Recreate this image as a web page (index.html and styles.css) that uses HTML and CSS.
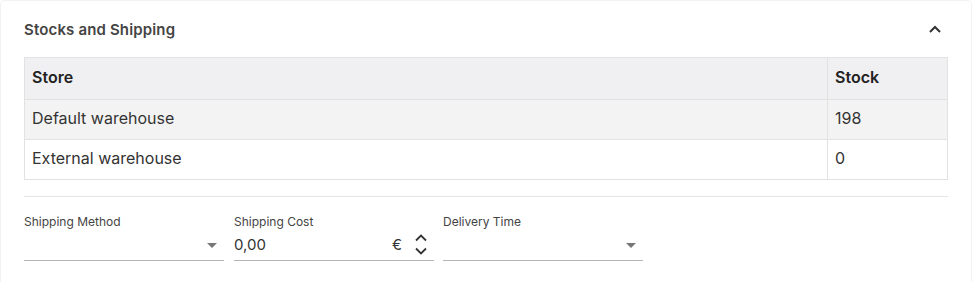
FILE: index.html
```html
<!DOCTYPE html>
<html>
<head>
<meta charset="utf-8">
<link rel="stylesheet" href="styles.css">
</head>
<body>
<div class="card">
  <div class="card-head">
    <h2 class="title">Stocks and Shipping</h2>
    <svg class="chev" width="14" height="10" viewBox="0 0 14 10"><path d="M2 8 L7 3 L12 8" fill="none" stroke="#333" stroke-width="2"/></svg>
  </div>
  <table class="stock">
    <thead>
      <tr><th class="c-store">Store</th><th class="c-stock">Stock</th></tr>
    </thead>
    <tbody>
      <tr class="odd"><td>Default warehouse</td><td>198</td></tr>
      <tr><td>External warehouse</td><td>0</td></tr>
    </tbody>
  </table>
  <div class="divider"></div>
  <div class="fields">
    <div class="field">
      <label class="lbl">Shipping Method</label>
      <div class="ctrl">
        <span class="val"></span>
        <span class="caret"></span>
      </div>
    </div>
    <div class="field">
      <label class="lbl">Shipping Cost</label>
      <div class="ctrl">
        <span class="val">0,00</span>
        <span class="eur">€</span>
        <span class="spin">
          <svg width="14" height="9" viewBox="0 0 14 9"><path d="M2 7.5 L7 2.5 L12 7.5" fill="none" stroke="#333" stroke-width="1.8"/></svg>
          <svg width="14" height="9" viewBox="0 0 14 9"><path d="M2 1.5 L7 6.5 L12 1.5" fill="none" stroke="#333" stroke-width="1.8"/></svg>
        </span>
      </div>
    </div>
    <div class="field">
      <label class="lbl">Delivery Time</label>
      <div class="ctrl">
        <span class="val"></span>
        <span class="caret"></span>
      </div>
    </div>
  </div>
</div>
</body>
</html>
```
FILE: styles.css
```css
* { box-sizing: border-box; }
html, body { margin: 0; padding: 0; background: #fff; }
body { font-family: Inter, "Noto Sans", Arial, sans-serif; color: #333; }
.card {
  width: 972px;
  min-height: 290px;
  border: 1px solid #f2f2f2;
  border-radius: 4px;
  padding: 0 24px 0 23px;
}
.card-head {
  display: flex;
  align-items: center;
  justify-content: space-between;
  height: 56px;
  padding-top: 1px;
}
.title {
  margin: 0;
  font-size: 15px;
  font-weight: 600;
  color: #444;
  letter-spacing: 0.15px;
}
.chev { margin-right: 5px; margin-top: -2px; }
.stock {
  width: 924px;
  border-collapse: collapse;
  font-size: 16px;
}
.stock th, .stock td {
  border: 1px solid #e2e2e2;
  text-align: left;
  padding: 0 7px 3px;
}
.stock th {
  background: #f0f0f2;
  height: 42px;
  font-weight: 600;
  color: #222;
}
.stock td { height: 40px; color: #333; }
.stock tr.odd td { background: #f3f3f3; }
.c-stock { width: 120px; }
.divider {
  width: 924px;
  height: 1px;
  background: #e6e6e6;
  margin-top: 16px;
}
.fields {
  display: flex;
  gap: 10px;
  padding-top: 17px;
}
.field { width: 200px; display: flex; flex-direction: column; }
.field:nth-child(3) { margin-left: -1px; }
.lbl { font-size: 12px; color: #444; line-height: 15px; height: 15px; }
.ctrl {
  display: flex;
  align-items: center;
  height: 33px;
  border-bottom: 1px solid #b5b5b5;
  margin-top: -1px;
}
.val { flex: 1; font-size: 15px; color: #333; padding-top: 1px; }
.caret {
  width: 0; height: 0;
  border-left: 5px solid transparent;
  border-right: 5px solid transparent;
  border-top: 5px solid #777;
  margin-right: 7px;
  margin-top: 3px;
}
.eur { font-size: 15px; color: #333; margin-right: 12px; padding-top: 1px; }
.spin { display: flex; flex-direction: column; gap: 5px; margin-right: 6px; margin-top: 1px; }
.spin svg { display: block; }
```
